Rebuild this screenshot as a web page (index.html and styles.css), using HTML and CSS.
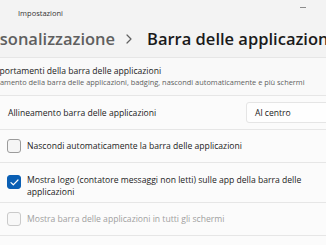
FILE: index.html
```html
<!DOCTYPE html>
<html lang="it">
<head>
    <meta charset="UTF-8">
    <meta name="viewport" content="width=device-width, initial-scale=1.0">
    <title>Impostazioni - Barra delle applicazioni</title>
    <link rel="stylesheet" href="styles.css">
</head>
<body>
    <div class="titlebar">
        <span class="app-title">Impostazioni</span>
        <div class="controls">
            <span class="ctrl"><span class="min-glyph"></span></span>
            <span class="ctrl"></span>
            <span class="ctrl"></span>
        </div>
    </div>

    <div class="main">
        <h1 class="breadcrumb">
            <span class="crumb-parent">Personalizzazione</span>
            <svg class="crumb-sep" width="6" height="10" viewBox="0 0 6 10">
                <path d="M1 1 L5 5 L1 9" fill="none" stroke="#606060" stroke-width="1.2" stroke-linecap="round" stroke-linejoin="round"/>
            </svg>
            <span class="crumb-current">Barra delle applicazioni</span>
        </h1>

        <div class="expander">
            <div class="expander-head">
                <div class="head-title">Comportamenti della barra delle applicazioni</div>
                <div class="head-sub">Allineamento della barra delle applicazioni, badging, nascondi automaticamente e più schermi</div>
            </div>

            <div class="row row-select">
                <span class="label">Allineamento barra delle applicazioni</span>
                <div class="select">
                    <span>Al centro</span>
                    <svg width="7" height="4" viewBox="0 0 7 4">
                        <path d="M0.5 0.5 L3.5 3.5 L6.5 0.5" fill="none" stroke="#8a8a8a" stroke-width="0.9" stroke-linecap="round" stroke-linejoin="round"/>
                    </svg>
                </div>
            </div>

            <label class="row row-check">
                <span class="check"></span>
                <span class="label">Nascondi automaticamente la barra delle applicazioni</span>
            </label>

            <label class="row row-check row-tall">
                <span class="check checked">
                    <svg width="9" height="7" viewBox="0 0 9 7">
                        <path d="M1 3.6 L3.3 5.8 L8 1" fill="none" stroke="#fff" stroke-width="1.2" stroke-linecap="round" stroke-linejoin="round"/>
                    </svg>
                </span>
                <span class="label">Mostra logo (contatore messaggi non letti) sulle app della barra delle applicazioni</span>
            </label>

            <label class="row row-check disabled">
                <span class="check"></span>
                <span class="label">Mostra barra delle applicazioni in tutti gli schermi</span>
            </label>

            <div class="row disabled">
                <span class="label">Durante l'uso di più schermi, mostra le app della barra in</span>
            </div>
        </div>
    </div>
</body>
</html>
```

FILE: styles.css
```css
* {
    margin: 0;
    padding: 0;
    box-sizing: border-box;
}

body {
    font-family: 'Open Sans', 'Noto Sans', sans-serif;
    background: #f3f3f3;
    color: #1b1b1b;
    width: 326px;
    height: 245px;
    overflow: hidden;
}

/* window title bar */
.titlebar {
    display: flex;
    align-items: center;
    height: 26px;
    width: 400px;
    padding-left: 18px;
}

.app-title {
    font-size: 7.5px;
    color: #333;
}

.controls {
    display: flex;
    margin-left: 225px;
    height: 100%;
}

.ctrl {
    width: 30px;
    height: 14px;
    display: flex;
    align-items: center;
    justify-content: center;
}

.min-glyph {
    width: 6px;
    height: 1px;
    background: #8c8c8c;
}

/* page content, cropped on the left */
.main {
    margin-left: -60px;
    width: 413px;
}

.breadcrumb {
    display: flex;
    align-items: center;
    height: 24px;
    margin-left: 33px;
    font-size: 16.5px;
    font-weight: 600;
    white-space: nowrap;
    margin-bottom: 7px;
}

.crumb-parent {
    color: #5f5f5f;
}

.crumb-sep {
    margin: 2px 15px 0 11px;
}

.crumb-current {
    color: #1a1a1a;
}

.expander {
    display: flex;
    flex-direction: column;
    gap: 1px;
    background: #e6e6e6;
    border-top: 1px solid #e6e6e6;
}

.expander-head {
    height: 37px;
    background: #f9f9f9;
    padding-left: 41px;
    display: flex;
    flex-direction: column;
    justify-content: center;
    white-space: nowrap;
}

.head-title {
    font-size: 8.6px;
    line-height: 11px;
}

.head-sub {
    font-size: 7.4px;
    line-height: 10px;
    color: #5f5f5f;
}

.row {
    display: flex;
    align-items: center;
    background: #fbfbfb;
    height: 32px;
    padding: 0 11px 0 68px;
    font-size: 8.6px;
}

.row-select {
    justify-content: space-between;
    height: 33px;
}

.select {
    width: 96px;
    height: 21px;
    background: #fefefe;
    border: 1px solid #e5e5e5;
    border-radius: 3px;
    display: flex;
    align-items: center;
    justify-content: space-between;
    padding: 0 6px 0 8px;
}

.row-check {
    gap: 6px;
    padding-left: 67px;
}

.row-tall {
    height: 39px;
    align-items: flex-start;
    padding-top: 12px;
}

.row-tall .label {
    line-height: 11.5px;
    width: 290px;
}

.check {
    flex: none;
    width: 14px;
    height: 14px;
    border: 1px solid #9b9b9b;
    border-radius: 3px;
    background: #f5f5f5;
    display: flex;
    align-items: center;
    justify-content: center;
}

.check.checked {
    background: #0a5fb4;
    border-color: #0a5fb4;
}

.disabled .label {
    color: #a0a0a0;
}

.disabled .check {
    border-color: #cacaca;
    background: #f8f8f8;
}
```
